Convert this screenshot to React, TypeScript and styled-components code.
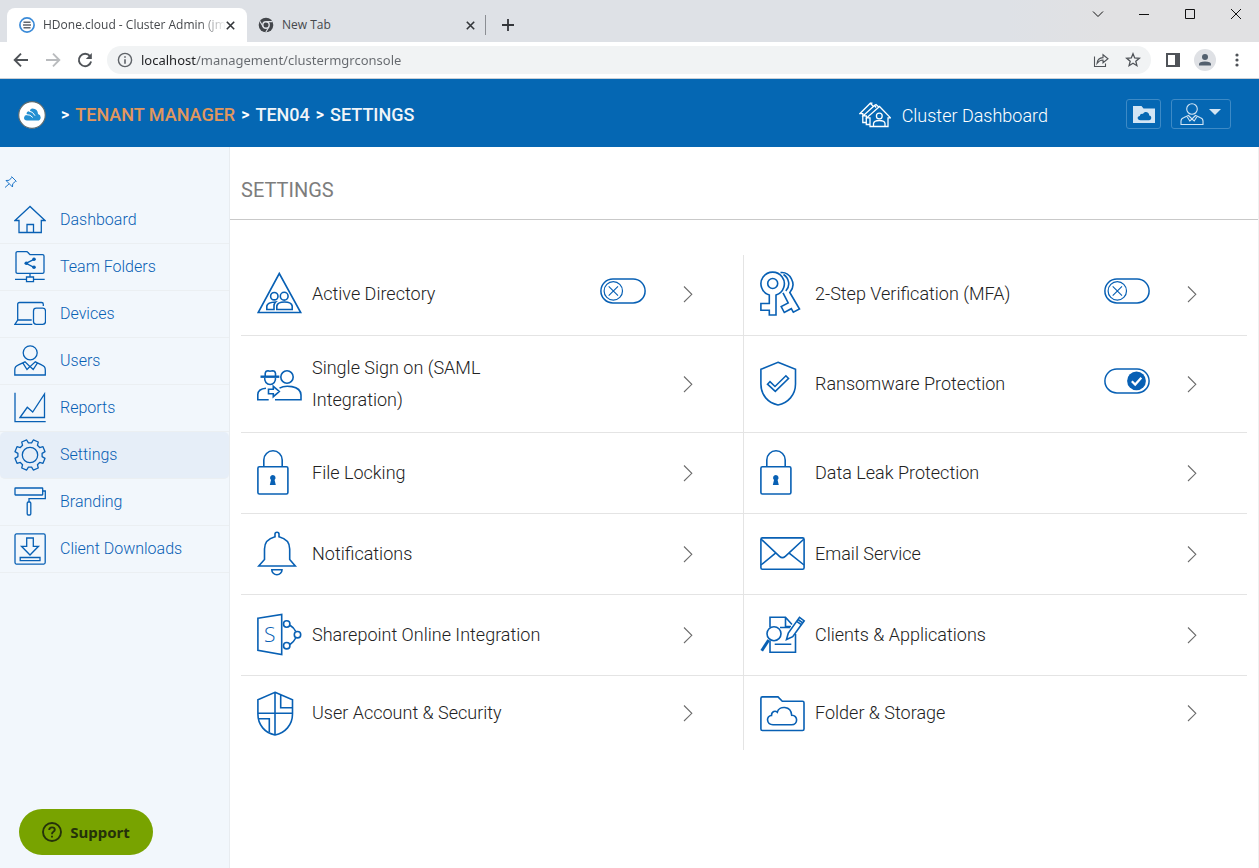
import React, { useState } from "react";
import styled, { createGlobalStyle, css } from "styled-components";

const UI_FONT = `"Open Sans", "Noto Sans", sans-serif`;
const APP_FONT = `Roboto, "Liberation Sans", sans-serif`;
const BLUE = "#0860b4";
const HEADER_BLUE = "#0567b3";

const GlobalStyle = createGlobalStyle`
  *, *::before, *::after { box-sizing: border-box; }
  body { margin: 0; background: #fff; font-family: ${APP_FONT}; }
  button { padding: 0; border: 0; background: none; color: inherit; font: inherit; cursor: pointer; }
  a { color: inherit; text-decoration: none; }
  ul { margin: 0; padding: 0; list-style: none; }
  svg { display: block; flex: none; }
`;

const Page = styled.div`
  display: flex;
  flex-direction: column;
  min-height: 100vh;
`;

/* ---------- browser chrome ---------- */

const TabStrip = styled.div`
  display: flex;
  align-items: flex-end;
  height: 42px;
  padding-left: 7px;
  background: linear-gradient(90deg, #dee1e6 80%, #e1e1e3 88%);
  font-family: ${UI_FONT};
  font-size: 12px;
  color: #45484c;
`;

const Tab = styled.div<{ $active?: boolean }>`
  display: flex;
  align-items: center;
  width: 240px;
  height: 34px;
  padding: 0 12px 0 ${(p) => (p.$active ? "12px" : "11px")};
  border-radius: 8px 8px 0 0;
  ${(p) => p.$active && css`background: #fff;`}
`;

const TabTitle = styled.button<{ $fade?: boolean }>`
  flex: 1;
  margin-left: 8px;
  padding-bottom: 2px;
  text-align: left;
  white-space: nowrap;
  ${(p) => p.$fade && css`mask-image: linear-gradient(90deg, #000 85%, transparent);`}
`;

const TabSeparator = styled.span`
  width: 1px;
  height: 20px;
  margin: 0 12px 7px -2px;
  background: #8b8e93;
`;

const NewTab = styled.button`
  display: grid;
  place-items: center;
  width: 20px;
  height: 34px;
`;

const WindowControls = styled.div`
  display: flex;
  align-self: flex-start;
  margin-left: auto;
  color: #111;
`;

const WindowButton = styled.button`
  display: grid;
  place-items: center;
  width: 46px;
  height: 28px;
`;

const Toolbar = styled.div`
  display: flex;
  align-items: center;
  height: 37px;
  padding: 0 6px 0 5px;
  border-bottom: 1px solid #c8ced6;
  background: #fff;
  color: #5f6368;
`;

const ToolButton = styled.button<{ $dim?: boolean }>`
  display: grid;
  place-items: center;
  width: 32px;
  height: 28px;
  color: ${(p) => (p.$dim ? "#b9bbbe" : "#4f5358")};
`;

const AddressBar = styled.div`
  display: flex;
  flex: 1;
  align-items: center;
  height: 28px;
  margin: 0 6px;
  padding: 0 2px 0 10px;
  border-radius: 14px;
  background: #f1f3f4;
`;

const AddressInput = styled.input`
  flex: 1;
  min-width: 0;
  margin-left: 8px;
  padding: 0;
  border: 0;
  outline: 0;
  color: #5f6368;
  background: linear-gradient(90deg, #202124 55px, #65696e 55px);
  background-clip: text;
  -webkit-text-fill-color: transparent;
  font: 13px "Noto Sans", sans-serif;
`;

/* ---------- application header ---------- */

const Header = styled.header`
  display: flex;
  align-items: center;
  height: 68px;
  padding: 4px 28px 0 18px;
  background: ${HEADER_BLUE};
  color: #fff;
`;

const Breadcrumb = styled.nav`
  display: flex;
  align-items: center;
  gap: 6px;
  margin-left: 15px;
  font-size: 18px;
  font-weight: 500;
  line-height: 24px;
`;

const Crumb = styled.a<{ $accent?: boolean }>`
  color: ${(p) => (p.$accent ? "#e2975d" : "#f0f4f8")};
`;

const CrumbMark = styled.span`
  font-size: 16px;
  font-weight: 700;
`;

const ClusterLink = styled.a`
  display: flex;
  align-items: center;
  gap: 11px;
  margin-left: auto;
  font-size: 18px;
  font-weight: 300;
`;

const HeaderButtons = styled.div`
  display: flex;
  gap: 10px;
  margin: 0 0 2px 78px;
`;

const HeaderButton = styled.button<{ $wide?: boolean }>`
  display: flex;
  align-items: center;
  justify-content: center;
  gap: 4px;
  width: ${(p) => (p.$wide ? "60px" : "35px")};
  height: 30px;
  border: 1px solid #3d8ac6;
  border-radius: 3px;
  color: #d3e5f4;
`;

/* ---------- body ---------- */

const Body = styled.div`
  display: flex;
  flex: 1;
`;

const Sidebar = styled.aside`
  flex: none;
  width: 230px;
  padding-top: 28px;
  border-right: 1px solid #e8ecf0;
  background: #f2f7fc;
  color: ${BLUE};
`;

const PinButton = styled.button`
  display: block;
  margin: 0 0 8px 4px;
`;

const NavLink = styled.a<{ $active?: boolean }>`
  display: flex;
  align-items: center;
  gap: 14px;
  height: 47px;
  padding-left: 14px;
  border-bottom: 1px solid #ebeff2;
  border-radius: ${(p) => (p.$active ? "5px" : "0")};
  background: ${(p) => (p.$active ? "#e6eef8" : "transparent")};
  font-size: 16px;
  font-weight: 300;
`;

const NavLabel = styled.span`
  padding-bottom: 2px;
`;

const Main = styled.main`
  flex: 1;
  min-width: 0;
  border-right: 1px solid #f0f0f0;
`;

const Title = styled.h1`
  margin: 0;
  padding: 30px 11px 16px;
  border-bottom: 1px solid #c9c9c9;
  color: #7d7d7d;
  font-size: 20px;
  font-weight: 400;
  line-height: 26px;
`;

const SettingsGrid = styled.ul`
  display: grid;
  grid-template-columns: 1fr 1fr;
  padding: 35px 11px 0 11px;
`;

const SettingItem = styled.li`
  display: flex;
  align-items: center;
  min-height: 81px;
  padding: 16px 50px 16px 16px;
  border-bottom: 1px solid #e4e4e4;
  color: #222;

  &:nth-child(odd) { border-right: 1px solid #e4e4e4; }
  &:nth-child(-n + 2) { padding-bottom: 18px; }
  &:nth-last-child(-n + 2) { min-height: 74px; border-bottom: 0; }
  & > svg { margin: -8px 9px -8px 0; color: ${BLUE}; }
`;

const SettingLabel = styled.a<{ $narrow?: boolean }>`
  max-width: ${(p) => (p.$narrow ? "200px" : "none")};
  font-size: 18px;
  font-weight: 300;
  line-height: 32px;
`;

const ItemEnd = styled.div`
  display: flex;
  align-items: center;
  gap: 37px;
  margin-left: auto;
`;

const Switch = styled.label`
  position: relative;
  margin-bottom: 6px;
  color: ${BLUE};
`;

const SwitchInput = styled.input`
  position: absolute;
  inset: 0;
  width: 100%;
  height: 100%;
  margin: 0;
  opacity: 0;
  cursor: pointer;
`;

const ChevronLink = styled.a`
  color: #6d6d6d;
`;

const SupportButton = styled.button`
  position: fixed;
  bottom: 13px;
  left: 19px;
  display: flex;
  align-items: center;
  justify-content: center;
  gap: 8px;
  width: 134px;
  height: 46px;
  border-radius: 23px;
  background: #78a300;
  color: #25320a;
  font: 700 15px "Noto Sans", sans-serif;
`;

/* ---------- icons ---------- */

type Kids = { children: React.ReactNode };

const NavIcon = ({ children }: Kids) => (
  <svg width="32" height="32" viewBox="0 0 32 32" fill="none" stroke="currentColor" strokeWidth="1.3" aria-hidden="true">
    {children}
  </svg>
);

const TileIcon = ({ children }: Kids) => (
  <svg width="46" height="46" viewBox="0 0 46 46" fill="none" stroke="currentColor" strokeWidth="1.6" aria-hidden="true">
    {children}
  </svg>
);

const gearPath = (() => {
  const pts: string[] = [];
  for (let k = 0; k < 8; k++) {
    const a = 22.5 + 45 * k;
    const corners: [number, number][] = [[-15, 12.2], [-10, 15.4], [10, 15.4], [15, 12.2]];
    corners.forEach(([d, r]) => {
      const t = ((a + d) * Math.PI) / 180;
      pts.push(`${(16 + r * Math.sin(t)).toFixed(2)} ${(16 - r * Math.cos(t)).toFixed(2)}`);
    });
  }
  return `M${pts.join("L")}Z`;
})();

const navItems = [
  {
    label: "Dashboard",
    icon: <path d="M16 2.5 1 16.5H5V28.5H27.3V16.5H31ZM13 28.5V20.5H19.5V28.5" />,
  },
  {
    label: "Team Folders",
    icon: (
      <>
        <path d="M3.5.7H12.5Q13.5.7 14 1.5L16 3.7H28.5Q30 3.7 30 5V21Q30 22.3 28.5 22.3H3.5Q2 22.3 2 21V2Q2 .7 3.5.7ZM16 22.3V26M12.5 26H19.5V30.7H12.5ZM1 28.3H12.5M19.5 28.3H30.7M20 8.3 12 12.3 20 16.3" />
        <g fill="currentColor" stroke="none">
          <circle cx="20" cy="8.3" r="1.8" />
          <circle cx="12.3" cy="12.3" r="1.8" />
          <circle cx="20" cy="16.3" r="1.8" />
        </g>
      </>
    ),
  },
  {
    label: "Devices",
    icon: (
      <>
        <path d="M29.3 8V6.3Q29.3 4.5 27.5 4.5H5.5Q3.7 4.5 3.7 6.3V22L.9 26.3H18.3M3.7 22H17.7" />
        <rect x="19.5" y="10.2" width="12" height="16.2" rx="2.8" />
      </>
    ),
  },
  {
    label: "Users",
    icon: (
      <>
        <circle cx="16.2" cy="7.8" r="7" />
        <path d="M.8 30V25Q.8 21.5 4 20.2L11 16.8 16 21.7 21.3 16.8 28 20.2Q31.3 21.5 31.3 25V30ZM8.8 17.8 13 24.5 16 21.5 19.2 24.5 23.5 17.8" />
      </>
    ),
  },
  {
    label: "Reports",
    icon: <path d="M1 .7V29.7H31.7M6 25.5 13.3 15.3 18.7 20 30.5 2V25.5Z" />,
  },
  {
    label: "Settings",
    icon: (
      <>
        <path d={gearPath} strokeLinejoin="round" />
        <circle cx="16" cy="16" r="7.7" />
      </>
    ),
  },
  {
    label: "Branding",
    icon: (
      <>
        <rect x="1" y="2" width="27.7" height="7" rx=".5" />
        <path d="M28.7 5H31.3V12.7H15V16" />
        <rect x="13.2" y="16" width="3.6" height="13" rx="1.2" />
      </>
    ),
  },
  {
    label: "Client Downloads",
    icon: (
      <>
        <rect x="1" y=".9" width="30.2" height="30.2" rx="1.5" />
        <path d="M12.7 5H19.3V13.3H24.5L16 22 7.5 13.3H12.7ZM6.2 24.5H26V27.7H6.2Z" />
      </>
    ),
  },
];

const lockIcon = (
  <>
    <rect x=".9" y="16.8" width="30" height="27.2" rx="1.5" />
    <path d="M6.8 16.8V10A9.2 9.2 0 0 1 25.2 10V16.8" />
    <path d="M15.8 25A2.8 2.8 0 0 1 17.6 29.9L18.8 35H12.8L14 29.9A2.8 2.8 0 0 1 15.8 25Z" fill="currentColor" stroke="none" />
  </>
);

type Setting = { label: string; icon: React.ReactNode; toggle?: boolean; initial?: boolean; narrow?: boolean };

const settings: Setting[] = [
  {
    label: "Active Directory",
    toggle: true,
    icon: (
      <>
        <path d="M22.3 2.5 1.2 41.5H43.7Z" />
        <circle cx="17.3" cy="25.2" r="3.7" />
        <circle cx="27.2" cy="25.2" r="3.9" />
        <path d="M19.8 38.5V35Q20.5 31 27.5 31T35.2 35V38.5ZM17 38.5H9.8V35Q10.5 31.3 18.7 31Q17 32.5 17 35Z" />
      </>
    ),
  },
  {
    label: "2-Step Verification (MFA)",
    toggle: true,
    icon: (
      <>
        <circle cx="12.7" cy="12.5" r="5" />
        <path d="M9.3 24A11.7 11.7 0 1 1 16 24V44H9.3V39.2H.9V32.5H9.3Z" />
        <path d="M20.5 1.6C29.5.5 37.5 12.5 29.8 21.5L39.5 38 33.3 41.2 31.3 37.7 24.3 41.5 21.2 35.5 28.2 32 23 21.8M23.5 3.5C29 7 30.8 15 25.8 20" />
      </>
    ),
  },
  {
    label: "Single Sign on (SAML Integration)",
    narrow: true,
    icon: (
      <>
        <path d="M8.2 15V12.5Q8.5 9.8 11 9.8L13 10.3 15.5 9.8Q18.2 9.8 18.5 12.5V15" />
        <path d="M3.5 15.7H22.3" strokeWidth="2.4" />
        <path d="M7.8 17A5.4 5.4 0 1 0 18.4 17" />
        <circle cx="30" cy="16" r="6.2" />
        <path d="M18 38.7H44V34C43.5 24 27.5 24 22.5 27.2M11.7 38.7H.8V33.5Q1 28 9 27.3M11.5 28.3H16.3V25.3L22.3 30.5 16.3 35.7V32.8H11.5Z" />
      </>
    ),
  },
  {
    label: "Ransomware Protection",
    toggle: true,
    initial: true,
    icon: (
      <path d="M18 1.3 35.5 8.3V23C35.5 34 28 42 18 44 8 42 .9 34 .9 23V8.3ZM7.5 23.2 10 20.7 15 25.5 25.9 14.8 28.5 17.5 15.3 30.3Z" />
    ),
  },
  { label: "File Locking", icon: lockIcon },
  { label: "Data Leak Protection", icon: lockIcon },
  {
    label: "Notifications",
    icon: (
      <>
        <path d="M18 5.8V3Q18 1.2 20 1.2T22 3V5.8Q32.7 8.5 32.7 18V28.5L38.3 35H1.7L7.5 28.5V18Q7.5 8.5 18 5.8Z" />
        <path d="M14.8 38.7H25A5.1 5.1 0 0 1 14.8 38.7Z" />
      </>
    ),
  },
  {
    label: "Email Service",
    icon: (
      <>
        <rect x=".9" y="6.9" width="43.2" height="31.4" rx="1.5" />
        <path d="M1 8 19.5 25.3Q22.3 28 25.3 25.3L44 8M1 34 15.2 22.3M44 34 29.5 22.3" />
      </>
    ),
  },
  {
    label: "Sharepoint Online Integration",
    icon: (
      <>
        <path d="M.9 6.3 24.7 2.5V42.5L.9 38.3ZM33 13.2Q36.8 15.5 38.7 19.3M38.7 26Q36.8 30 33 32.5" />
        <circle cx="29.7" cy="12" r="3.2" />
        <circle cx="40.5" cy="22.7" r="3.2" />
        <circle cx="29.7" cy="33.7" r="3.2" />
        <text x="12.7" y="30" textAnchor="middle" fontFamily="Open Sans" fontSize="21" fontWeight="300" fill="currentColor" stroke="none">
          S
        </text>
      </>
    ),
  },
  {
    label: "Clients & Applications",
    icon: (
      <>
        <path d="M10 15.5V5.3H25.5L32 12.5M10 28.5V40.3H35.5V22M25.5 5.3V14.5H31M20 15.5H30M14.7 32.3H31.3" />
        <circle cx="14" cy="21.7" r="7" />
        <path d="M8.7 28 1.7 38.8" strokeWidth="3" />
        <path d="M26.5 27.5 28.3 21 39.5 5.3 44.2 8.8 32.7 24.7ZM36.7 9.3 41.3 12.7M38 7.5 42.7 10.8" />
      </>
    ),
  },
  {
    label: "User Account & Security",
    icon: (
      <path d="M18 2.3 35.5 9.7V24C35.5 35 28 43 18 45 8 43 .9 35 .9 24V9.7ZM18 2.3V45M.9 23.2H35.5M23.7 5V17.7H35.5M1.5 28.7H12.3V42" />
    ),
  },
  {
    label: "Folder & Storage",
    icon: (
      <path d="M2.4 6.9H18L22.3 11.2H42.5Q44 11.2 44 12.7V39Q44 40.5 42.5 40.5H2.4Q.9 40.5.9 39V8.4Q.9 6.9 2.4 6.9ZM13 34.8C6 34.5 6 25.5 11.5 25.5 11.5 21 15.5 20.5 17.3 22.3 19 15.5 31 15.5 31.7 25.3 38 25 38.5 34.5 31.5 34.8Z" />
    ),
  },
];

const CloseGlyph = () => (
  <svg width="9" height="9" viewBox="0 0 9 9" stroke="#33363a" strokeWidth="1.6" aria-hidden="true">
    <path d="M.8.8 8.2 8.2M8.2.8.8 8.2" />
  </svg>
);

const SettingSwitch = ({ name, initial }: { name: string; initial?: boolean }) => {
  const [on, setOn] = useState(Boolean(initial));
  return (
    <Switch>
      <SwitchInput type="checkbox" aria-label={name} checked={on} onChange={() => setOn(!on)} />
      <svg width="46" height="26" viewBox="0 0 46 26" fill="none" stroke="currentColor" aria-hidden="true">
        <rect x=".9" y=".9" width="44.2" height="24" rx="12" strokeWidth="1.5" />
        {on ? (
          <>
            <circle cx="32.5" cy="12.9" r="9.4" fill="currentColor" stroke="none" />
            <path d="M27.8 13.2 31.2 16.6 37.3 9.8" stroke="#fff" strokeWidth="2.2" />
          </>
        ) : (
          <>
            <circle cx="13.3" cy="12.9" r="9.2" strokeWidth="1.2" />
            <path d="M8.7 8.3 18 17.6M18 8.3 8.7 17.6" strokeWidth="1.1" />
          </>
        )}
      </svg>
    </Switch>
  );
};

const BrowserChrome = () => (
  <>
    <TabStrip>
      <Tab $active>
        <svg width="16" height="16" viewBox="0 0 16 16" fill="none" aria-hidden="true">
          <circle cx="8" cy="8" r="7.1" fill="#fff" stroke="#3b8bd8" strokeWidth="1.7" />
          <path d="M4.5 5.2H11.5M4 8H12M4.5 10.8H11.5" stroke="#62666c" strokeWidth="1.6" />
        </svg>
        <TabTitle $fade>HDone.cloud - Cluster Admin (jm</TabTitle>
        <button aria-label="Close HDone.cloud tab"><CloseGlyph /></button>
      </Tab>
      <Tab>
        <svg width="16" height="16" viewBox="0 0 16 16" fill="none" aria-hidden="true">
          <circle cx="8" cy="8" r="7.3" fill="#43464b" />
          <circle cx="8" cy="8" r="3.2" fill="#43464b" stroke="#dee1e6" strokeWidth="1.4" />
          <path d="M8 4.6H14.5M5.1 9.7 1.9 4.2M10.9 9.7 7.8 15.2" stroke="#dee1e6" strokeWidth="1.1" />
        </svg>
        <TabTitle>New Tab</TabTitle>
        <button aria-label="Close New Tab"><CloseGlyph /></button>
      </Tab>
      <TabSeparator />
      <NewTab aria-label="New tab">
        <svg width="12" height="12" viewBox="0 0 12 12" stroke="#33363a" strokeWidth="1.8" aria-hidden="true">
          <path d="M6 0V12M0 6H12" />
        </svg>
      </NewTab>
      <WindowControls>
        <WindowButton aria-label="Search tabs">
          <svg width="12" height="12" viewBox="0 0 12 12" fill="none" stroke="currentColor"><path d="M1 3.5 6 8.5 11 3.5" /></svg>
        </WindowButton>
        <WindowButton aria-label="Minimize">
          <svg width="12" height="12" viewBox="0 0 12 12" fill="none" stroke="currentColor"><path d="M1 6.5H11" /></svg>
        </WindowButton>
        <WindowButton aria-label="Maximize">
          <svg width="12" height="12" viewBox="0 0 12 12" fill="none" stroke="currentColor"><path d="M1.5 1.5H10.5V10.5H1.5Z" /></svg>
        </WindowButton>
        <WindowButton aria-label="Close window">
          <svg width="12" height="12" viewBox="0 0 12 12" fill="none" stroke="currentColor"><path d="M1 1 11 11M11 1 1 11" /></svg>
        </WindowButton>
      </WindowControls>
    </TabStrip>
    <Toolbar>
      <ToolButton aria-label="Back">
        <svg width="16" height="16" viewBox="0 0 16 16" fill="none" stroke="currentColor" strokeWidth="1.9"><path d="M15 8H2.2M8 1.7 1.7 8 8 14.3" /></svg>
      </ToolButton>
      <ToolButton $dim aria-label="Forward">
        <svg width="16" height="16" viewBox="0 0 16 16" fill="none" stroke="currentColor" strokeWidth="1.9"><path d="M1 8H13.8M8 1.7 14.3 8 8 14.3" /></svg>
      </ToolButton>
      <ToolButton aria-label="Reload">
        <svg width="16" height="16" viewBox="0 0 16 16" fill="none" stroke="currentColor" strokeWidth="1.9">
          <path d="M13 4.2A6.2 6.2 0 1 0 14.1 9.5" />
          <path d="M14.8 1V7H8.8Z" fill="currentColor" stroke="none" />
        </svg>
      </ToolButton>
      <AddressBar>
        <svg width="16" height="16" viewBox="0 0 16 16" fill="none" stroke="currentColor" strokeWidth="1.4" aria-hidden="true">
          <circle cx="8" cy="8" r="6.6" />
          <path d="M8 7.2V11.7M8 4.3V5.8" strokeWidth="1.6" />
        </svg>
        <AddressInput aria-label="Address" defaultValue="localhost/management/clustermgrconsole" spellCheck={false} />
        <ToolButton aria-label="Share">
          <svg width="16" height="16" viewBox="0 0 16 16" fill="none" stroke="currentColor" strokeWidth="1.1">
            <path d="M1.5 4.5V14.5H12.5V11.5M4 11.5Q4.5 5.8 10 5.6V2.7L15 6.7 10 10.8V8Q6.5 8 4 11.5Z" />
          </svg>
        </ToolButton>
        <ToolButton aria-label="Bookmark">
          <svg width="16" height="16" viewBox="0 0 16 16" fill="none" stroke="currentColor" strokeWidth="1.3">
            <path d="M8 1.8 9.7 6 14.3 6.3 10.8 9.2 11.9 13.7 8 11.3 4.1 13.7 5.2 9.2 1.7 6.3 6.3 6Z" />
          </svg>
        </ToolButton>
      </AddressBar>
      <ToolButton aria-label="Side panel">
        <svg width="14" height="14" viewBox="0 0 14 14"><path fill="currentColor" fillRule="evenodd" d="M0 0H14V14H0ZM2 2V12H9V2Z" /></svg>
      </ToolButton>
      <ToolButton aria-label="Profile">
        <svg width="22" height="22" viewBox="0 0 22 22">
          <circle cx="11" cy="11" r="11" fill="#dfe1e5" />
          <g fill="#53606f">
            <circle cx="11" cy="8" r="3" />
            <path d="M5 16.5V15.3Q5 12.5 11 12.5T17 15.3V16.5Z" />
          </g>
        </svg>
      </ToolButton>
      <ToolButton aria-label="Menu">
        <svg width="4" height="14" viewBox="0 0 4 14" fill="currentColor">
          <circle cx="2" cy="2" r="1.6" /><circle cx="2" cy="7" r="1.6" /><circle cx="2" cy="12" r="1.6" />
        </svg>
      </ToolButton>
    </Toolbar>
  </>
);

const AppHeader = () => (
  <Header>
    <svg width="28" height="30" viewBox="0 0 28 30" aria-hidden="true">
      <circle cx="14" cy="15" r="13.3" fill="#fff" stroke="#5d6b70" strokeWidth="1.2" />
      <path d="M9 20.6Q6 20.3 6 17.7 6.2 15.2 8.8 14.8 8 12 10.5 11.2L12 11.2Q12 8.6 14.5 8.5 19.8 8.8 20 14 22.7 14.8 22.7 17.5 22.6 20.6 19.5 20.6Z" fill="#2490d2" />
      <path d="M8 14.6Q12.5 14.3 14.8 17.5M10.8 11Q15 11.4 17 15.7" fill="none" stroke="#fff" strokeWidth="1" />
    </svg>
    <Breadcrumb aria-label="Breadcrumb">
      <CrumbMark>&gt;</CrumbMark>
      <Crumb href="#tenants" $accent>TENANT MANAGER</Crumb>
      <CrumbMark>&gt;</CrumbMark>
      <Crumb href="#ten04">TEN04</Crumb>
      <CrumbMark>&gt;</CrumbMark>
      <Crumb href="#settings">SETTINGS</Crumb>
    </Breadcrumb>
    <ClusterLink href="#cluster">
      <svg width="32" height="26" viewBox="0 0 32 26" fill="none" stroke="currentColor" strokeWidth="1.3" aria-hidden="true">
        <path d="M20.5 4.5 7.8 15.8H11V24.5H29V15.8H31.5ZM17.2 5.5 15.5 3.5 4.2 13.8H7.3V22.5H11M13 3 11.3 1.2.8 11.7H3.8V20.5H7.3M11.3 1.2 13.5 1.2M15.5 3.5 17 2.5 19.5 4.8M11.3 1.2 14 4" />
        <circle cx="20.3" cy="14" r="2.9" />
        <path d="M14.5 24.5V21.5Q15 18.5 20.3 18.5T26 21.5V24.5" />
      </svg>
      Cluster Dashboard
    </ClusterLink>
    <HeaderButtons>
      <HeaderButton aria-label="File browser">
        <svg width="22" height="17" viewBox="0 0 22 17" aria-hidden="true">
          <path d="M0 0H8.5L10.5 2.5H22V17H0Z" fill="currentColor" />
          <path d="M7.5 14.3C3.7 14 4 10.2 6.8 10 7 7.8 9 7.2 10 8 11.5 4.5 16.5 6 16.2 9.5 19 9.8 19 14 16 14.3Z" fill={HEADER_BLUE} />
        </svg>
      </HeaderButton>
      <HeaderButton $wide aria-label="Account menu">
        <svg width="24" height="24" viewBox="0 0 24 24" fill="none" stroke="currentColor" strokeWidth="1.1" aria-hidden="true">
          <circle cx="12" cy="7" r="5.3" />
          <path d="M1 22.5V19Q1 16.5 4 15.5L8.5 13.5 12 17 15.5 13.5 20 15.5Q23 16.5 23 19V22.5ZM6.8 14.2 9.8 19 12 17 14.2 19 17.2 14.2" />
        </svg>
        <svg width="14" height="12" viewBox="0 0 14 12" aria-hidden="true"><path d="M1 1H13L7 7Z" fill="currentColor" /></svg>
      </HeaderButton>
    </HeaderButtons>
  </Header>
);

export default function App() {
  return (
    <Page>
      <GlobalStyle />
      <BrowserChrome />
      <AppHeader />
      <Body>
        <Sidebar>
          <PinButton aria-label="Pin menu">
            <svg width="14" height="14" viewBox="0 0 14 14" fill="none" stroke="#1f76c9" strokeWidth="1" aria-hidden="true">
              <path d="M7.5 1.5 12.5 6.5M8 2.2 5.2 5.3 2 5.5 8.5 12 8.7 8.8 11.8 6M5.2 8.8 1 12.5" />
            </svg>
          </PinButton>
          <nav aria-label="Main">
            {navItems.map(({ label, icon }) => (
              <NavLink key={label} href={`#${label}`} $active={label === "Settings"}>
                <NavIcon>{icon}</NavIcon>
                <NavLabel>{label}</NavLabel>
              </NavLink>
            ))}
          </nav>
        </Sidebar>
        <Main>
          <Title>SETTINGS</Title>
          <SettingsGrid>
            {settings.map(({ label, icon, toggle, initial, narrow }) => (
              <SettingItem key={label}>
                <TileIcon>{icon}</TileIcon>
                <SettingLabel href={`#${label}`} $narrow={narrow}>{label}</SettingLabel>
                <ItemEnd>
                  {toggle && <SettingSwitch name={`Enable ${label}`} initial={initial} />}
                  <ChevronLink href={`#${label}`} aria-label={`Open ${label}`}>
                    <svg width="10" height="18" viewBox="0 0 10 18" fill="none" stroke="currentColor" strokeWidth="1.1" aria-hidden="true">
                      <path d="M1 1.5 8.8 9.3 1 17" />
                    </svg>
                  </ChevronLink>
                </ItemEnd>
              </SettingItem>
            ))}
          </SettingsGrid>
        </Main>
      </Body>
      <SupportButton>
        <svg width="20" height="20" viewBox="0 0 20 20" fill="none" stroke="currentColor" strokeWidth="1.9" aria-hidden="true">
          <circle cx="10" cy="10" r="9" />
          <path d="M7.2 8Q7.3 5.4 10 5.4T12.8 7.8Q12.8 9 11.4 9.8 10 10.6 10 12.2M10 13.7V15.5" />
        </svg>
        Support
      </SupportButton>
    </Page>
  );
}
